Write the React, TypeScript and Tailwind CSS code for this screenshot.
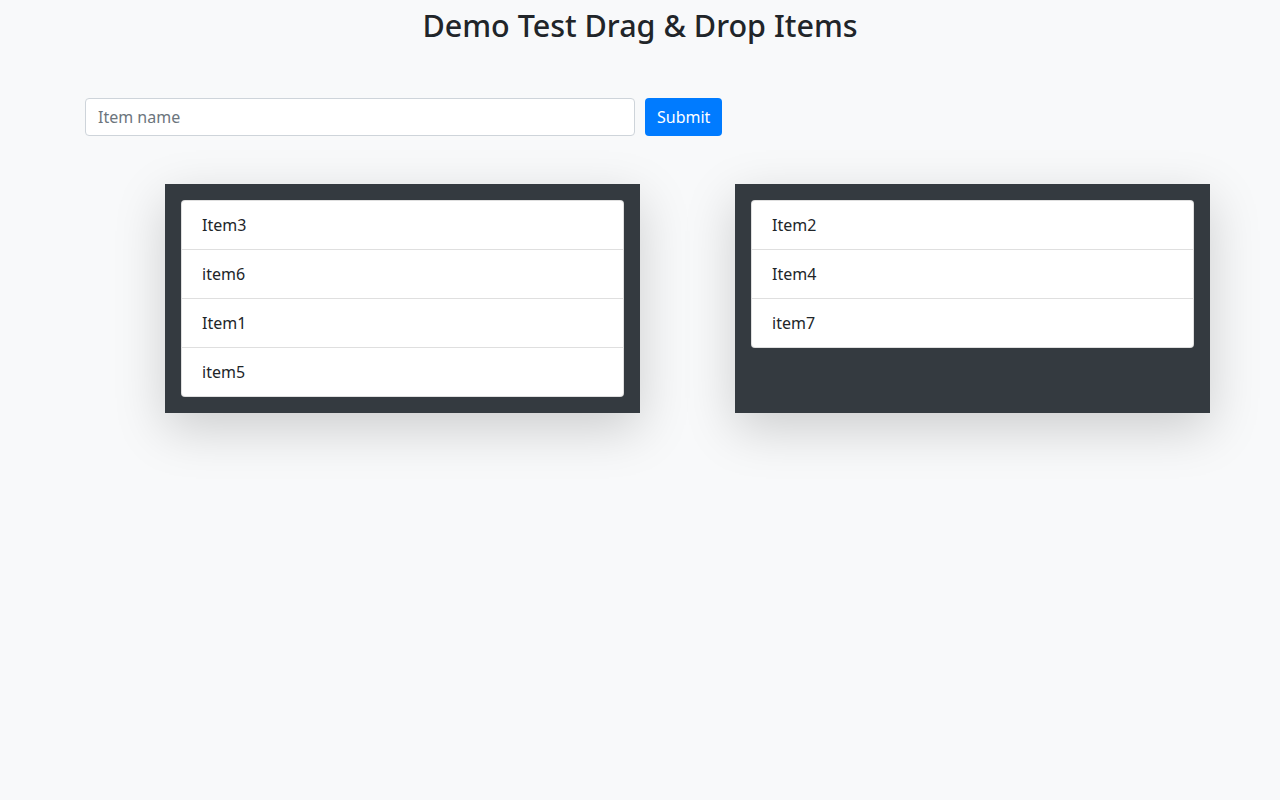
import { useState } from "react"

const initialLeft = ["Item3", "item6", "Item1", "item5"]
const initialRight = ["Item2", "Item4", "item7"]

function ItemList({ items }: { items: string[] }) {
  return (
    <ul className="bg-white border border-[rgba(0,0,0,0.125)] rounded">
      {items.map((item, i) => (
        <li
          key={item}
          className={
            "px-5 py-3 leading-6 text-base text-[#212529] " +
            (i > 0 ? "border-t border-[rgba(0,0,0,0.125)]" : "")
          }
        >
          {item}
        </li>
      ))}
    </ul>
  )
}

export default function App() {
  const [name, setName] = useState("")
  const [left, setLeft] = useState(initialLeft)

  const submit = (e: React.FormEvent) => {
    e.preventDefault()
    if (!name.trim()) return
    setLeft([...left, name.trim()])
    setName("")
  }

  return (
    <div className="min-h-screen bg-[#f8f9fa] font-['Noto_Sans',sans-serif] text-[#212529]">
      <h2 className="h-[46px] pt-[7px] text-center text-[30.5px] font-medium leading-[37px]">
        Demo Test Drag &amp; Drop Items
      </h2>

      <div className="w-[1140px] mx-auto px-[15px] pt-[52px]">
        <form onSubmit={submit} className="flex gap-[10px]">
          <input
            value={name}
            onChange={(e) => setName(e.target.value)}
            placeholder="Item name"
            className="w-[550px] h-[38px] px-3 bg-white border border-[#ced4da] rounded text-base text-[#495057] placeholder:text-[#6c757d] outline-none"
          />
          <button
            type="submit"
            className="h-[38px] px-3 bg-[#007bff] text-white text-base rounded"
          >
            Submit
          </button>
        </form>
      </div>

      {/* Drop zones */}
      <div className="w-[1140px] mx-auto flex items-stretch pt-[48px]">
        <div className="ml-[95px] w-[475px] bg-[#343a40] p-4 shadow-[0_1rem_3rem_rgba(0,0,0,0.175)]">
          <ItemList items={left} />
        </div>
        <div className="ml-[95px] w-[475px] bg-[#343a40] p-4 shadow-[0_1rem_3rem_rgba(0,0,0,0.175)]">
          <ItemList items={initialRight} />
        </div>
      </div>
    </div>
  )
}
